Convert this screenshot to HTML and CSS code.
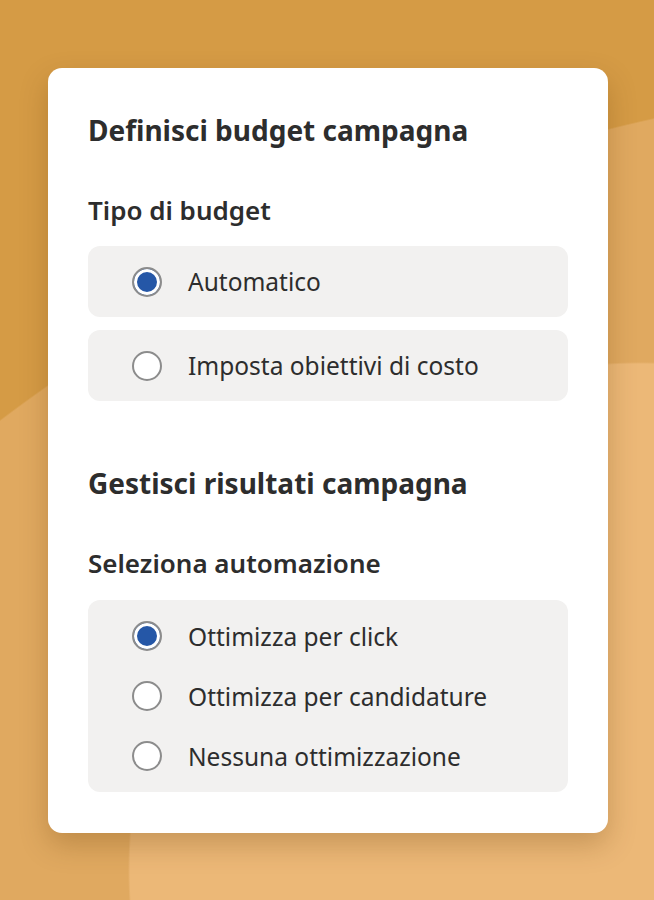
FILE: index.html
```html
<!DOCTYPE html>
<html lang="it">
<head>
    <meta charset="UTF-8">
    <title>Budget campagna</title>
    <link rel="stylesheet" href="styles.css">
</head>
<body>
    <div class="card">
        <h2 class="section-title">Definisci budget campagna</h2>
        <h3 class="group-title">Tipo di budget</h3>
        <div class="pill-list">
            <label class="option pill">
                <input type="radio" name="budget" checked>
                <span>Automatico</span>
            </label>
            <label class="option pill">
                <input type="radio" name="budget">
                <span>Imposta obiettivi di costo</span>
            </label>
        </div>

        <h2 class="section-title second">Gestisci risultati campagna</h2>
        <h3 class="group-title">Seleziona automazione</h3>
        <div class="box">
            <label class="option">
                <input type="radio" name="auto" checked>
                <span>Ottimizza per click</span>
            </label>
            <label class="option">
                <input type="radio" name="auto">
                <span>Ottimizza per candidature</span>
            </label>
            <label class="option">
                <input type="radio" name="auto">
                <span>Nessuna ottimizzazione</span>
            </label>
        </div>
    </div>
</body>
</html>
```

FILE: styles.css
```css
html, body {
    height: 100%;
}

body {
    margin: 0;
    padding: 68px 46px 0 48px;
    box-sizing: border-box;
    font-family: 'Noto Sans', 'Open Sans', sans-serif;
    color: #2d2d2d;
    background-color: #d59b45;
    background-image:
        radial-gradient(ellipse 512px 508px at 640px 870px, #ecb877 99.6%, transparent 100%),
        radial-gradient(circle 1688px at 1018px 1766px, #e0a960 99.9%, transparent 100%);
    background-repeat: no-repeat;
}

.card {
    width: 560px;
    box-sizing: border-box;
    background-color: #fff;
    border-radius: 14px;
    padding: 44px 40px 41px 40px;
    box-shadow: 0 12px 28px rgba(90, 50, 0, 0.25);
}

.section-title {
    margin: 0;
    font-size: 28px;
    font-weight: 700;
    line-height: 36px;
}

.section-title.second {
    margin-top: 64px;
}

.group-title {
    margin: 47px 0 0 0;
    font-size: 26px;
    font-weight: 600;
    line-height: 30px;
}

.pill-list {
    margin-top: 21px;
    display: flex;
    flex-direction: column;
    gap: 13px;
}

.pill {
    height: 71px;
    background-color: #f2f1f0;
    border-radius: 12px;
}

.box {
    margin-top: 22px;
    padding: 6px 0;
    background-color: #f2f1f0;
    border-radius: 12px;
}

.box .option {
    height: 60px;
}

.option {
    display: flex;
    align-items: center;
    gap: 26px;
    padding-left: 44px;
    font-size: 24.5px;
    cursor: pointer;
}

.option input {
    appearance: none;
    -webkit-appearance: none;
    margin: 0;
    width: 30px;
    height: 30px;
    flex-shrink: 0;
    border-radius: 50%;
    border: 2px solid #8c8c8c;
    background-color: #fff;
    box-sizing: border-box;
}

.option input:checked {
    background-color: #2557a7;
    box-shadow: inset 0 0 0 3px #fff;
}
```
